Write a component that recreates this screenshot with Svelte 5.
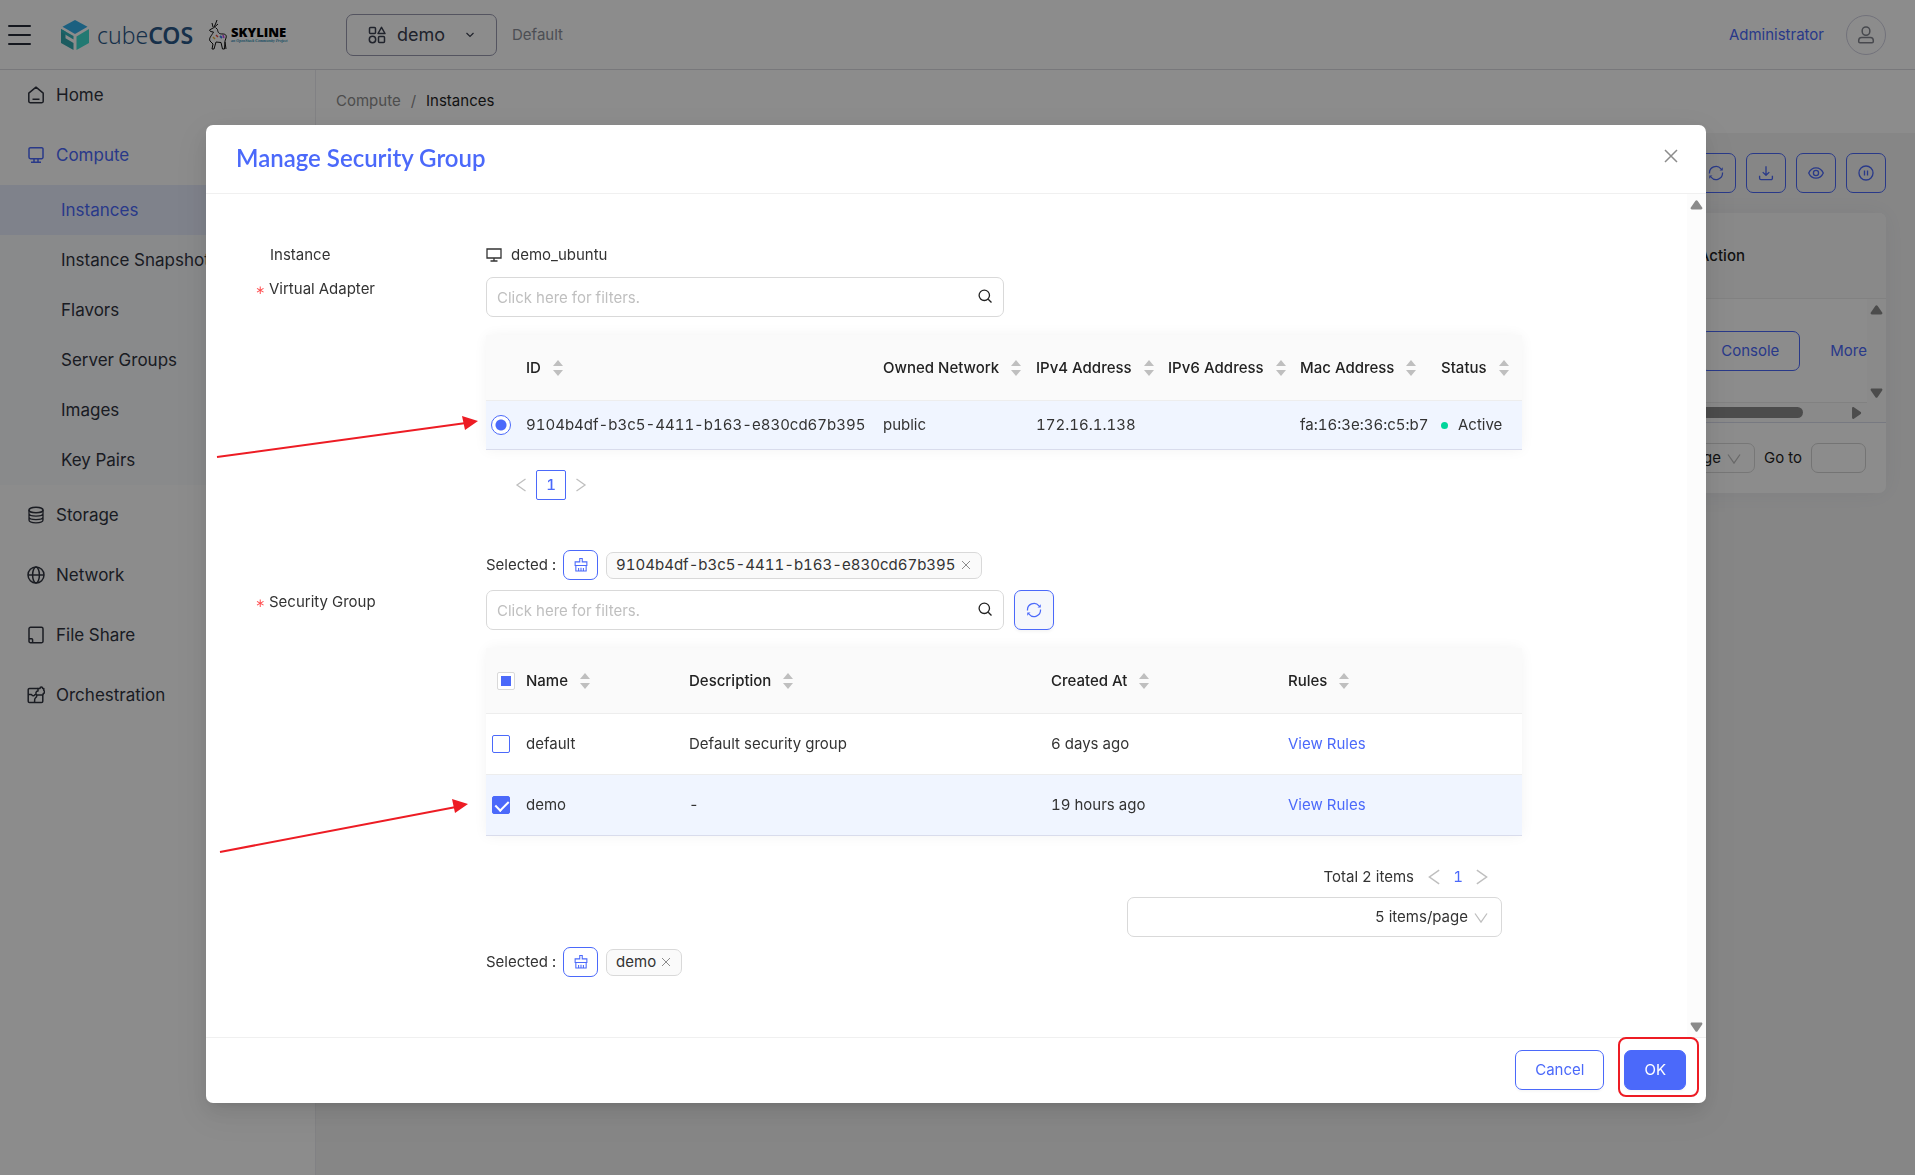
<script lang="ts">
  const subItems = ['Instances', 'Instance Snapshots', 'Flavors', 'Server Groups', 'Images', 'Key Pairs'];

  const adapterColumns = [
    { title: '', width: 30 },
    { title: 'ID', width: 357 },
    { title: 'Owned Network', width: 153 },
    { title: 'IPv4 Address', width: 132 },
    { title: 'IPv6 Address', width: 132 },
    { title: 'Mac Address', width: 141 },
    { title: 'Status', width: 91 }
  ];

  const groupColumns = [
    { title: 'Name', width: 163 },
    { title: 'Description', width: 362 },
    { title: 'Created At', width: 237 },
    { title: 'Rules', width: 244 }
  ];

  const adapterId = '9104b4df-b3c5-4411-b163-e830cd67b395';

  let groups = $state([
    { name: 'default', description: 'Default security group', created: '6 days ago', checked: false },
    { name: 'demo', description: '-', created: '19 hours ago', checked: true }
  ]);

  let selected = $derived(groups.filter((g) => g.checked));

  function clearGroups() {
    groups.forEach((g) => (g.checked = false));
  }
</script>

{#snippet icon(name: string)}
  <svg class="icon" viewBox="0 0 18 18" fill="none" stroke="currentColor" stroke-width="1.5" stroke-linejoin="round" aria-hidden="true">
    {#if name === 'home'}
      <path d="M1.8 7.2 9 1.2l7.2 6v8a1.6 1.6 0 0 1-1.6 1.6H3.4a1.6 1.6 0 0 1-1.6-1.6zM5.5 13.2h7" />
    {:else if name === 'compute'}
      <path d="M3.4 1.7h11.2a1.4 1.4 0 0 1 1.4 1.4v8.2a1.4 1.4 0 0 1-1.4 1.4H3.4A1.4 1.4 0 0 1 2 11.300V3.100A1.4 1.4 0 0 1 3.400 1.700zM7 12.700v3.400M11 12.700v3.400M4 16.300h10" />
    {:else if name === 'storage'}
      <ellipse cx="9" cy="4" rx="7" ry="2.800" />
      <path d="M2 4v10c0 1.600 3 2.800 7 2.800s7-1.200 7-2.800V4M2 7.500c0 1.600 3 2.600 7 2.600s7-1 7-2.600M2 11c0 1.600 3 2.600 7 2.600s7-1 7-2.600" stroke-width="1.300" />
    {:else if name === 'network'}
      <circle cx="9" cy="9" r="8" />
      <ellipse cx="9" cy="9" rx="3.400" ry="8" />
      <path d="M1 9h16" />
    {:else if name === 'file'}
      <path d="M2 12.500V2.800A1.600 1.600 0 0 1 3.600 1.200h10.800A1.600 1.600 0 0 1 16 2.800v12.400a1.600 1.600 0 0 1-1.600 1.600H3.600A1.600 1.600 0 0 1 2 15.200zM2 12.800h2.600a1 1 0 0 1 1 1v3" />
    {:else if name === 'orchestration'}
      <path d="M11 2.500H2.500a1.300 1.300 0 0 0-1.300 1.300v11.400a1.300 1.300 0 0 0 1.300 1.300h12a1.300 1.300 0 0 0 1.300-1.300V9" />
      <path d="M1.200 8.500h3.300c.8 1.600 2.400 1.600 3.200.4 1-.8 1.800-.4 2.800.1h5.300M11 2.500v2.600c-2.400 0-2.600 2.800-1.200 3.900.2 1.600-.2 2.200-1.400 3-1 .8-.8 1.800-.8 4.500M11 5.200V2.600h2c0-2 2.600-2 2.600 0h1.200v2c1.200.6 1 2.600-.6 2.800V9" />
    {:else if name === 'refresh'}
      <path d="M1.700 9.500A7.300 7.300 0 0 1 14.600 4.300M16.300 8.500A7.300 7.300 0 0 1 3.400 13.700" stroke-width="1.400" />
      <path d="M16.600 2.600v3.600h-3.600zM1.400 15.400v-3.600H5z" fill="currentColor" stroke="none" />
    {:else if name === 'download'}
      <path d="M9 1.500v10M5.300 8 9 11.600 12.700 8M1.800 12v3a1.500 1.500 0 0 0 1.500 1.500h11.400a1.500 1.500 0 0 0 1.500-1.500v-3" />
    {:else if name === 'eye'}
      <path d="M.8 9C2.600 5 5.600 3.200 9 3.200S15.400 5 17.200 9C15.400 13 12.400 14.800 9 14.800S2.600 13 .8 9z" />
      <circle cx="9" cy="9" r="2.900" />
    {:else if name === 'pause'}
      <circle cx="9" cy="9" r="7.900" />
      <path d="M7.300 6.200v5.600M10.700 6.200v5.600" />
    {:else if name === 'user'}
      <rect x="5.200" y="1" width="7.600" height="8.200" rx="3.600" />
      <path d="M4.600 11.600h8.800a3 3 0 0 1 2.900 3v1a1.200 1.200 0 0 1-1.200 1.200H2.900a1.200 1.200 0 0 1-1.200-1.200v-1a3 3 0 0 1 2.900-3z" />
    {:else if name === 'project'}
      <rect x="1.500" y="1.500" width="6" height="6" rx="1" />
      <path d="M13.500 1.300 17 7.500h-7z" />
      <circle cx="4.500" cy="13.500" r="3.200" />
      <rect x="10.500" y="10.500" width="6" height="6" rx="1" />
    {:else if name === 'broom'}
      <path d="M7.600 5.500V1.700h2.800v3.800h5.200v4H2.400v-4zM3.200 9.500v6.300h11.600V9.500M6.300 12.500v3M9 12v3.500M11.700 12.500v3" stroke-width="1.200" stroke-linejoin="miter" />
    {/if}
  </svg>
{/snippet}

{#snippet chevron(dir: string)}
  <svg class="chevron {dir}" viewBox="0 0 14 14" fill="none" stroke="currentColor" stroke-width="1.3" aria-hidden="true">
    <path d="M11.500 1 3 7l8.500 6" />
  </svg>
{/snippet}

{#snippet triangle(dir: string)}
  <svg class="triangle {dir}" viewBox="0 0 14 10" aria-hidden="true">
    <path d="M5.700.8a1.600 1.600 0 0 1 2.600 0l4.800 7c.7 1-.1 2-1 2H1.900c-.9 0-1.700-1-1-2z" fill="#8b8b8b" />
  </svg>
{/snippet}

{#snippet sortTitle(title: string)}
  <span class="sort-title">
    {title}
    <svg class="sorter" viewBox="0 0 10 16" aria-hidden="true">
      <path d="M5 0l5 6H0zM5 16l5-6H0z" fill="#bfbfbf" />
    </svg>
  </span>
{/snippet}

{#snippet search(id: string, label: string)}
  <div class="search">
    <input {id} type="text" aria-label={label} placeholder="Click here for filters." />
    <svg viewBox="0 0 14 14" fill="none" stroke="#222" stroke-width="1.3" aria-hidden="true">
      <circle cx="6.300" cy="6.300" r="5.200" />
      <path d="m10.200 10.200 3.300 3.300" />
    </svg>
  </div>
{/snippet}

{#snippet tag(text: string)}
  <span class="tag">
    {text}
    <button type="button" aria-label="Remove {text}">
      <svg viewBox="0 0 10 10" stroke="#8c8c8c" aria-hidden="true"><path d="M1 1l8 8M9 1 1 9" /></svg>
    </button>
  </span>
{/snippet}

<div class="page">
  <header class="header">
    <button class="hamburger" type="button" aria-label="Toggle menu">
      <svg viewBox="0 0 24 22" stroke="#262b38" stroke-width="2" stroke-linecap="round" aria-hidden="true">
        <path d="M1 2h21M1 11h21M1 20h21" />
      </svg>
    </button>
    <a class="brand" href="#home">
      <svg class="cube" viewBox="0 0 28 30" aria-hidden="true">
        <path d="M14 0 26.500 6.800 14 14 1.500 6.800z" fill="#34b0ea" />
        <path d="M0 9l4.500 2.500v6.800L12.500 23v7L0 23z" fill="#33a8b0" />
        <path d="M28 9v14l-12.500 7V16.500z" fill="#3fdccf" />
        <path d="M0 9l12.500 7v3.500L0 12z" fill="#33b4bc" />
      </svg>
      <span class="cube-text">cube<b>COS</b></span>
      <svg class="deer" viewBox="0 0 20 30" fill="none" stroke="#111" stroke-linejoin="round" aria-hidden="true">
        <path d="M9 0 7.500 4 6 7M4 3l1 4M10 4 6 7.500 1.500 10l1 1.500 3 .5c-2 4-5 6-3.500 9L5 24l-1 5h2l2-7 5 .5 1.500 6.500h2l.5-8 1-3c1-3-1-4-3-4-4 0-5-1-5.500-4.500L7.500 7.500M17 22l1 7" />
        <path d="M8 15l2 2" stroke="#e8473f" stroke-width="1.500" />
        <path d="M12 16l2 2" stroke="#3f7be8" stroke-width="2" />
        <path d="M15 15l1 3" stroke="#c93fe8" stroke-width="1.500" />
        <path d="M5 17l2 2" stroke="#e8b53f" stroke-width="1.500" />
      </svg>
      <span class="skyline">
        <span class="skyline-name">SKYLINE</span>
        <span class="skyline-sub">an OpenStack Community Project</span>
      </span>
    </a>
    <button class="project" type="button">
      {@render icon('project')}
      demo
      <svg class="arrow" viewBox="0 0 10 10" fill="none" stroke="currentColor" stroke-width="1.200" aria-hidden="true"><path d="M1.500 3 5 6.500 8.500 3" /></svg>
    </button>
    <span class="domain">Default</span>
    <a class="user-name" href="#user">Administrator</a>
    <button class="avatar" type="button" aria-label="Account">{@render icon('user')}</button>
  </header>

  <div class="layout">
    <nav class="sidebar">
      <a class="menu-item" href="#home">{@render icon('home')}Home</a>
      <a class="menu-item active" href="#compute">{@render icon('compute')}Compute</a>
      <div class="submenu">
        {#each subItems as item, i}
          <a class="sub-item" class:current={i === 0} href="#{item}">{item}</a>
        {/each}
      </div>
      <a class="menu-item" href="#storage">{@render icon('storage')}Storage</a>
      <a class="menu-item" href="#network">{@render icon('network')}Network</a>
      <a class="menu-item" href="#share">{@render icon('file')}File Share</a>
      <a class="menu-item" href="#orchestration">{@render icon('orchestration')}Orchestration</a>
    </nav>

    <main class="main">
      <div class="breadcrumb">
        <a href="#compute">Compute</a><span>/</span><strong>Instances</strong>
      </div>
      <div class="content">
        <div class="toolbar">
          {#each ['refresh', 'download', 'eye', 'pause'] as name}
            <button class="square" type="button" aria-label={name}>{@render icon(name)}</button>
          {/each}
        </div>
        <section class="card">
          <div class="card-head"><span>Action</span></div>
          <div class="card-row">
            <div class="card-actions">
              <button class="console" type="button">Console</button>
              <a href="#more">More</a>
            </div>
            <div class="card-scroll">
              {@render triangle('up')}
              {@render triangle('down')}
            </div>
          </div>
          <div class="card-hscroll">
            <div class="thumb"></div>
            {@render triangle('right')}
          </div>
          <div class="card-foot">
            <span class="select page-size">
              <select aria-label="Page size"><option>10 items/page</option></select>
              {@render chevron('down')}
            </span>
            <label for="goto">Go to</label>
            <input id="goto" type="text" />
          </div>
        </section>
      </div>
    </main>
  </div>
</div>

<div class="mask">
  <div class="modal" role="dialog" aria-modal="true" aria-labelledby="modal-title">
    <div class="modal-head">
      <h2 id="modal-title">Manage Security Group</h2>
      <button class="close" type="button" aria-label="Close">
        <svg viewBox="0 0 14 14" stroke="#8c8c8c" stroke-width="1.500" aria-hidden="true"><path d="M1 1l12 12M13 1 1 13" /></svg>
      </button>
    </div>

    <div class="modal-body">
      <form class="form" id="manage-form">
        <div class="form-row">
          <span class="label">Instance</span>
          <div class="field instance">
            <svg viewBox="0 0 16 14" fill="none" stroke="#333" stroke-width="1.300" aria-hidden="true">
              <path d="M1 1h14v9H1zM8 10v3M4.500 13h7" />
            </svg>
            demo_ubuntu
          </div>
        </div>

        <div class="form-row">
          <label class="label required" for="adapter-filter">Virtual Adapter</label>
          <div class="field">
            {@render search('adapter-filter', 'Virtual Adapter')}
            <table class="adapters">
              <colgroup>
                {#each adapterColumns as col}<col style="width: {col.width}px" />{/each}
              </colgroup>
              <thead>
                <tr>
                  {#each adapterColumns as col}
                    <th>{#if col.title}{@render sortTitle(col.title)}{/if}</th>
                  {/each}
                </tr>
              </thead>
              <tbody>
                <tr class="picked">
                  <td class="pick"><input type="radio" name="adapter" aria-label={adapterId} checked /></td>
                  <td>{adapterId}</td>
                  <td>public</td>
                  <td>172.16.1.138</td>
                  <td></td>
                  <td>fa:16:3e:36:c5:b7</td>
                  <td><span class="status">Active</span></td>
                </tr>
              </tbody>
            </table>
            <div class="pager">
              <button type="button" aria-label="Previous">{@render chevron('left')}</button>
              <button class="current" type="button">1</button>
              <button type="button" aria-label="Next">{@render chevron('right')}</button>
            </div>
            <div class="selected after-pager">
              <span>Selected :</span>
              <button class="clear" type="button" aria-label="Clear">{@render icon('broom')}</button>
              {@render tag(adapterId)}
            </div>
          </div>
        </div>

        <div class="form-row">
          <label class="label required" for="group-filter">Security Group</label>
          <div class="field">
            <div class="search-line">
              {@render search('group-filter', 'Security Group')}
              <button class="square tinted" type="button" aria-label="Refresh">{@render icon('refresh')}</button>
            </div>
            <table class="groups">
              <colgroup>
                <col style="width: 30px" />
                {#each groupColumns as col}<col style="width: {col.width}px" />{/each}
              </colgroup>
              <thead>
                <tr>
                  <th class="pick-all"><input class="partial" type="checkbox" aria-label="Select all" /></th>
                  {#each groupColumns as col}
                    <th>{@render sortTitle(col.title)}</th>
                  {/each}
                </tr>
              </thead>
              <tbody>
                {#each groups as group}
                  <tr class:picked={group.checked}>
                    <td class="pick"><input type="checkbox" aria-label={group.name} bind:checked={group.checked} /></td>
                    <td>{group.name}</td>
                    <td>{group.description}</td>
                    <td>{group.created}</td>
                    <td><a href="#rules">View Rules</a></td>
                  </tr>
                {/each}
              </tbody>
            </table>
            <div class="pager small">
              <span>Total {groups.length} items</span>
              <button type="button" aria-label="Previous">{@render chevron('left')}</button>
              <button class="number" type="button">1</button>
              <button type="button" aria-label="Next">{@render chevron('right')}</button>
            </div>
            <div class="select per-page">
              <select aria-label="Items per page"><option>5 items/page</option></select>
              {@render chevron('down')}
            </div>
            <div class="selected">
              <span>Selected :</span>
              <button class="clear" type="button" aria-label="Clear" onclick={clearGroups}>{@render icon('broom')}</button>
              {#each selected as group}{@render tag(group.name)}{/each}
            </div>
          </div>
        </div>
      </form>
      <div class="scrollbar">
        {@render triangle('up')}
        {@render triangle('down')}
      </div>
    </div>

    <div class="modal-foot">
      <button class="btn" type="button">Cancel</button>
      <div class="ok-mark"><button class="btn primary" type="submit" form="manage-form">OK</button></div>
    </div>

    <!-- red pointers to the picked rows -->
    <svg class="pointers" aria-hidden="true">
      <path d="M11 332 260 298M14 727 250 682" stroke="#ed1c24" stroke-width="2" />
      <path d="M272 296 256 291 259 305zM262 679 246 674 249 688z" fill="#ed1c24" />
    </svg>
  </div>
</div>

<style>
  :global(*) {
    box-sizing: border-box;
  }

  :global(body) {
    margin: 0;
    background: #f5f5f5;
    font-family: Inter, "Noto Sans", sans-serif;
    font-size: 15px;
    font-variant-numeric: tabular-nums;
    line-height: 24px;
    color: #333;
  }

  button, input, select {
    font: inherit;
    color: inherit;
    margin: 0;
    padding: 0;
    border: none;
    background: none;
  }

  button, select {
    cursor: pointer;
  }

  a {
    color: #4b69fa;
    text-decoration: none;
  }

  svg {
    display: block;
    flex: none;
  }

  .icon {
    width: 18px;
    height: 18px;
  }

  .page {
    height: 100vh;
    display: flex;
    flex-direction: column;
    overflow: hidden;
  }

  /* header */

  .header {
    display: flex;
    align-items: center;
    flex: none;
    height: 70px;
    padding: 0 29px 0 8px;
    background: #fff;
    border-bottom: 1px solid #dadae0;
  }

  .hamburger {
    width: 53px;
  }

  .hamburger svg {
    width: 24px;
    height: 22px;
  }

  .brand {
    display: flex;
    align-items: center;
    width: 285px;
    color: #2b5888;
  }

  .cube {
    width: 28px;
    height: 30px;
    margin-right: 8px;
  }

  .cube-text {
    font-family: "Noto Sans", sans-serif;
    font-size: 23px;
    font-weight: 300;
    margin-right: 15px;
  }

  .cube-text b {
    font-weight: 600;
  }

  .deer {
    width: 20px;
    height: 30px;
    margin-right: 3px;
  }

  .skyline {
    display: flex;
    flex-direction: column;
    white-space: nowrap;
  }

  .skyline-name {
    font-family: "Open Sans", sans-serif;
    font-size: 13px;
    font-weight: 800;
    line-height: 12px;
    color: #000;
  }

  .skyline-sub {
    font-family: "Liberation Serif", serif;
    font-size: 4px;
    font-style: italic;
    font-weight: 700;
    line-height: 6px;
    color: #2a8fb5;
  }

  .project {
    display: flex;
    align-items: center;
    gap: 11px;
    height: 42px;
    width: 151px;
    padding-left: 21px;
    border: 1px solid #9a9ab0;
    border-radius: 7px;
    font-size: 18px;
    color: #3b4050;
  }

  .project .arrow {
    width: 10px;
    height: 10px;
    margin-left: 9px;
  }

  .domain {
    margin-left: 15px;
    color: #8c8f99;
  }

  .user-name {
    margin-left: auto;
  }

  .avatar {
    display: flex;
    align-items: center;
    justify-content: center;
    width: 40px;
    height: 40px;
    margin-left: 22px;
    border: 1px solid #d0d0e0;
    border-radius: 50%;
    color: #83868f;
  }

  /* sidebar */

  .layout {
    display: flex;
    flex: 1;
  }

  .sidebar {
    flex: none;
    width: 316px;
    background: #fff;
    border-right: 1px solid #ececf0;
    font-size: 17px;
  }

  .menu-item {
    display: flex;
    align-items: center;
    gap: 11px;
    height: 50px;
    padding-left: 27px;
    margin-bottom: 10px;
    color: #30343f;
  }

  .menu-item.active {
    margin-bottom: 5px;
    color: #4b69fa;
  }

  .submenu {
    margin-bottom: 5px;
    background: #fafbfe;
  }

  .sub-item {
    display: block;
    line-height: 50px;
    padding-left: 61px;
    color: #30343f;
  }

  .sub-item.current {
    background: #e8edfe;
    color: #4b69fa;
  }

  /* main page */

  .main {
    flex: 1;
    min-width: 0;
  }

  .breadcrumb {
    display: flex;
    gap: 10px;
    height: 63px;
    padding: 19px 20px;
    background: #fff;
    color: #8c8c8c;
  }

  .breadcrumb a {
    color: inherit;
  }

  .breadcrumb strong {
    font-weight: 400;
    color: #1f1f1f;
  }

  .content {
    padding: 20px 29px 20px 20px;
  }

  .toolbar {
    display: flex;
    justify-content: flex-end;
    gap: 10px;
    margin-bottom: 20px;
  }

  .square {
    display: flex;
    align-items: center;
    justify-content: center;
    width: 40px;
    height: 40px;
    border: 1px solid #4b69fa;
    border-radius: 7px;
    color: #4b69fa;
  }

  .square .icon {
    width: 16px;
    height: 16px;
  }

  .card {
    background: #fff;
    border-radius: 7px;
    box-shadow: 0 0 24px rgba(40, 50, 110, 0.07);
  }

  .card-head {
    display: flex;
    align-items: center;
    justify-content: flex-end;
    height: 86px;
    padding-right: 141px;
    border-bottom: 1px solid #ececec;
    border-radius: 7px 7px 0 0;
    background: #fafafa;
    font-weight: 500;
    color: #1f1f1f;
  }

  .card-row {
    display: flex;
    height: 104px;
  }

  .card-actions {
    display: flex;
    align-items: center;
    justify-content: flex-end;
    gap: 30px;
    flex: 1;
    border-bottom: 1px solid #ececec;
  }

  .console {
    height: 40px;
    padding: 0 20px;
    border: 1px solid #4b69fa;
    border-radius: 7px;
    color: #4b69fa;
  }

  .card-scroll {
    display: flex;
    flex-direction: column;
    align-items: center;
    justify-content: space-between;
    width: 19px;
    padding: 6px 0 5px;
    background: #fcfcfc;
  }

  .card-hscroll {
    display: flex;
    align-items: center;
    justify-content: flex-end;
    gap: 47px;
    height: 20px;
    padding-right: 23px;
    border-bottom: 1px solid #d9dcec;
    background: #fcfcfc;
  }

  .thumb {
    width: 900px;
    height: 11px;
    border-radius: 6px;
    background: #8b8b8b;
  }

  .triangle {
    width: 13px;
    height: 10px;
  }

  .triangle.down {
    transform: rotate(180deg);
  }

  .triangle.right {
    transform: rotate(90deg);
  }

  .card-foot {
    display: flex;
    align-items: center;
    justify-content: flex-end;
    gap: 9px;
    height: 70px;
    padding-right: 20px;
    color: #1f1f1f;
  }

  .card-foot input {
    width: 55px;
    height: 30px;
    border: 1px solid #d4d4d4;
    border-radius: 7px;
  }

  .select {
    position: relative;
    display: block;
    border: 1px solid #d9d9d9;
    border-radius: 7px;
  }

  .select select {
    appearance: none;
    width: 100%;
    height: 100%;
    padding-right: 33px;
    text-align-last: right;
  }

  .select .chevron {
    position: absolute;
    top: calc(50% - 6px);
    right: 13px;
    color: #bfbfbf;
    pointer-events: none;
  }

  .page-size {
    width: 150px;
    height: 30px;
  }

  .chevron {
    width: 14px;
    height: 14px;
  }

  .chevron.right {
    transform: scaleX(-1);
  }

  .chevron.down {
    transform: rotate(-90deg);
  }

  /* modal */

  .mask {
    position: fixed;
    inset: 0;
    display: flex;
    justify-content: center;
    align-items: flex-start;
    padding: 125px 3px 20px 0;
    overflow: auto;
    background: rgba(0, 0, 0, 0.45);
  }

  .modal {
    position: relative;
    width: 1500px;
    max-width: 100%;
    background: #fff;
    border-radius: 7px;
    box-shadow: 0 4px 8px -5px rgba(0, 0, 0, 0.12), 0 8px 20px rgba(0, 0, 0, 0.08), 0 11px 35px 10px rgba(0, 0, 0, 0.05);
  }

  .modal-head {
    display: flex;
    align-items: center;
    justify-content: space-between;
    height: 69px;
    padding: 0 28px 2px 30px;
    border-bottom: 1px solid #f0f0f0;
  }

  h2 {
    margin: 0;
    font-family: Lato, sans-serif;
    font-size: 24px;
    font-weight: 600;
    color: #4b69fa;
  }

  .close svg {
    width: 14px;
    height: 14px;
  }

  .close {
    margin-bottom: 4px;
  }

  .modal-body {
    display: flex;
  }

  .form {
    flex: 1;
    display: flex;
    flex-direction: column;
    gap: 10px;
    padding: 49px 0 60px;
  }

  .form-row {
    display: flex;
  }

  .label {
    flex: none;
    width: 280px;
    padding-left: 64px;
  }

  .label.required {
    padding-left: 49px;
  }

  .label.required::before {
    content: "∗";
    display: inline-block;
    width: 14px;
    font-family: "DejaVu Sans", sans-serif;
    font-size: 12px;
    color: #ff4d4f;
  }

  .field {
    width: 1036px;
    min-width: 0;
  }

  .instance {
    display: flex;
    align-items: center;
    gap: 9px;
  }

  .instance svg {
    width: 16px;
    height: 14px;
  }

  .search {
    position: relative;
    width: 518px;
  }

  .search input {
    width: 100%;
    height: 40px;
    padding: 0 40px 0 10px;
    border: 1px solid #d9d9d9;
    border-radius: 7px;
  }

  .search input::placeholder {
    color: #bfbfbf;
    opacity: 1;
  }

  .search svg {
    position: absolute;
    top: 12px;
    right: 12px;
    width: 14px;
    height: 14px;
  }

  .search-line {
    display: flex;
    gap: 10px;
  }

  .tinted {
    background: #f5f7fc;
    box-shadow: 0 2px 3px rgba(0, 0, 0, 0.04);
  }

  table {
    width: 100%;
    margin-top: 18px;
    table-layout: fixed;
    border-collapse: separate;
    border-spacing: 0;
    border-radius: 7px 7px 0 0;
    box-shadow: 0 0 14px rgba(0, 0, 0, 0.05);
  }

  th, td {
    padding: 0 0 0 10px;
    text-align: left;
    white-space: nowrap;
    border-bottom: 1px solid #ededed;
  }

  th {
    height: 66px;
    background: #fafafa;
    font-weight: 500;
    color: #222;
  }

  .adapters td {
    height: 49px;
  }

  .groups td {
    height: 61px;
  }

  tr:last-child td {
    border-bottom-color: #d9dcec;
  }

  .picked td {
    background: #f0f5ff;
  }

  .sort-title {
    display: flex;
    align-items: center;
    gap: 12px;
  }

  .sorter {
    width: 10px;
    height: 16px;
  }

  .pick {
    padding-left: 6px;
  }

  .pick-all {
    padding-left: 11px;
  }

  input[type="radio"],
  input[type="checkbox"] {
    appearance: none;
    display: block;
    width: 18px;
    height: 18px;
    border: 1px solid #4b69fa;
    border-radius: 2px;
    background: #fff;
  }

  input[type="radio"] {
    width: 20px;
    height: 20px;
    margin-left: -1px;
    border-radius: 50%;
    background: radial-gradient(circle, #4b69fa 5px, #fff 6px);
  }

  input[type="checkbox"]:checked {
    background: #4b69fa;
  }

  input[type="checkbox"]:checked::after {
    content: "";
    display: block;
    width: 6px;
    height: 11px;
    margin: 1px 0 0 5px;
    border: solid #fff;
    border-width: 0 2px 2px 0;
    transform: rotate(45deg);
  }

  input.partial {
    border-color: #d9d9d9;
    background: linear-gradient(#4b69fa, #4b69fa) center / 10px 10px no-repeat #fff;
  }

  .status {
    display: flex;
    align-items: center;
    gap: 10px;
  }

  .status::before {
    content: "";
    width: 7px;
    height: 7px;
    border-radius: 50%;
    background: #00d59b;
  }

  .pager {
    display: flex;
    align-items: center;
    margin: 20px 0 0 20px;
  }

  .pager button {
    display: flex;
    align-items: center;
    justify-content: center;
    width: 30px;
    height: 30px;
    color: #bfbfbf;
  }

  .pager .current {
    border: 1px solid #4b69fa;
    border-radius: 2px;
    font-weight: 500;
    color: #4b69fa;
  }

  .pager.small {
    justify-content: flex-end;
    margin: 26px 28px 5px 0;
  }

  .pager.small button {
    width: 24px;
  }

  .pager.small span {
    margin-right: 8px;
  }

  .pager.small .number {
    color: #4b69fa;
  }

  .pager.small .chevron {
    width: 16px;
    height: 16px;
  }

  .per-page {
    width: 375px;
    height: 40px;
    margin: 0 20px 10px auto;
  }

  .selected {
    display: flex;
    align-items: center;
    gap: 8px;
    height: 30px;
  }

  .selected span:first-child {
    margin-right: -1px;
  }

  .after-pager {
    margin-top: 50px;
  }

  .clear {
    display: flex;
    align-items: center;
    justify-content: center;
    width: 35px;
    height: 30px;
    border: 1px solid #4b69fa;
    border-radius: 7px;
    color: #4b69fa;
  }

  .clear .icon {
    width: 16px;
    height: 16px;
  }

  .tag {
    display: flex;
    align-items: center;
    gap: 5px;
    height: 27px;
    padding: 0 10px 0 9px;
    border: 1px solid #d9d9d9;
    border-radius: 7px;
    background: #fafafa;
  }

  .tag svg {
    width: 10px;
    height: 10px;
  }

  .scrollbar {
    display: flex;
    flex-direction: column;
    align-items: center;
    justify-content: space-between;
    width: 19px;
    padding: 6px 0 5px;
    background: #fcfcfc;
  }

  .modal-foot {
    display: flex;
    justify-content: flex-end;
    gap: 20px;
    padding: 12px 20px 13px;
    border-top: 1px solid #f0f0f0;
  }

  .btn {
    height: 40px;
    padding: 0 19px;
    border: 1px solid #4b69fa;
    border-radius: 7px;
    color: #4b69fa;
    box-shadow: 0 2px 2px rgba(0, 0, 0, 0.03);
  }

  .btn.primary {
    background: #4b69fa;
    color: #fff;
  }

  .ok-mark {
    position: relative;
  }

  .ok-mark::after {
    content: "";
    position: absolute;
    inset: -13px -13px -7px -6px;
    border: 2px solid #ed1c24;
    border-radius: 8px;
    pointer-events: none;
  }

  .pointers {
    position: absolute;
    top: 0;
    left: 0;
    width: 280px;
    height: 740px;
    pointer-events: none;
  }
</style>
